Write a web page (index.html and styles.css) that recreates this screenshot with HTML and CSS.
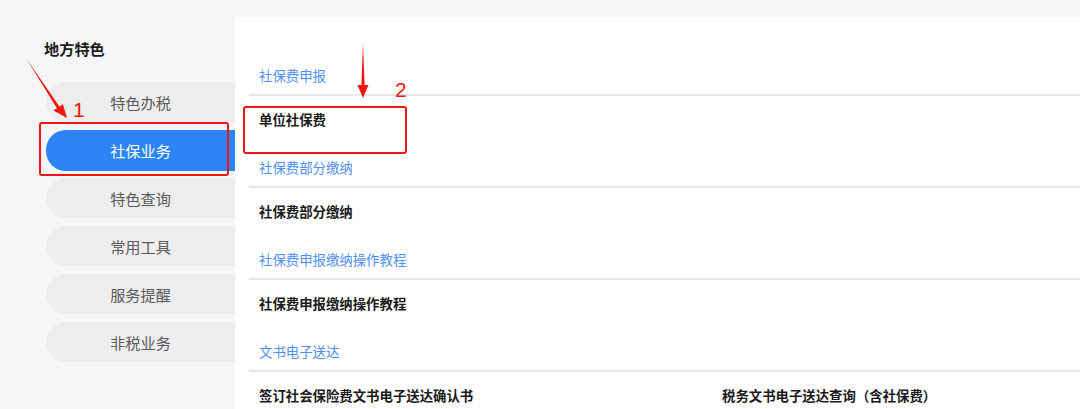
FILE: index.html
```html
<!DOCTYPE html>
<html lang="zh-CN">
<head>
    <meta charset="UTF-8">
    <meta name="viewport" content="width=device-width, initial-scale=1.0">
    <title>地方特色</title>
    <link rel="stylesheet" href="styles.css">
</head>
<body>
    <div class="page">
        <div class="sidebar">
            <h3 class="sidebar-title">地方特色</h3>
            <ul class="menu">
                <li class="menu-item">特色办税</li>
                <li class="menu-item active">社保业务</li>
                <li class="menu-item">特色查询</li>
                <li class="menu-item">常用工具</li>
                <li class="menu-item">服务提醒</li>
                <li class="menu-item">非税业务</li>
            </ul>
        </div>

        <div class="panel">
            <div class="group">
                <div class="group-title">社保费申报</div>
                <div class="group-items">
                    <span class="item">单位社保费</span>
                </div>
            </div>
            <div class="group">
                <div class="group-title">社保费部分缴纳</div>
                <div class="group-items">
                    <span class="item">社保费部分缴纳</span>
                </div>
            </div>
            <div class="group">
                <div class="group-title">社保费申报缴纳操作教程</div>
                <div class="group-items">
                    <span class="item">社保费申报缴纳操作教程</span>
                </div>
            </div>
            <div class="group">
                <div class="group-title">文书电子送达</div>
                <div class="group-items">
                    <span class="item">签订社会保险费文书电子送达确认书</span>
                    <span class="item">税务文书电子送达查询（含社保费）</span>
                </div>
            </div>
        </div>
    </div>

    <!-- annotation layer -->
    <div class="mark mark-1"></div>
    <div class="mark mark-2"></div>
    <svg class="arrows" width="1080" height="409" viewBox="0 0 1080 409">
        <polygon points="26,58 59.4,106.4 62.9,104.2 67,118 53.4,110.4 56.9,108.2" fill="#f01616"/>
        <polygon points="363,43 364.6,85 368.5,85 363,98 357.5,85 361.4,85" fill="#f01616"/>
        <text x="73" y="117" class="num">1</text>
        <text x="395" y="97" class="num">2</text>
    </svg>
</body>
</html>
```

FILE: styles.css
```css
* {
    box-sizing: border-box;
}

body {
    margin: 0;
    background-color: #f5f6f8;
    font-family: "Noto Sans CJK SC", "Noto Sans", sans-serif;
    overflow: hidden;
}

.page {
    display: flex;
    width: 1080px;
    height: 409px;
    overflow: hidden;
}

.sidebar {
    width: 235px;
    flex-shrink: 0;
    padding-top: 37px;
}

.sidebar-title {
    margin: 0 0 23px 44px;
    font-size: 15.2px;
    line-height: 22px;
    font-weight: bold;
    color: #1a1a1a;
}

.menu {
    list-style: none;
    margin: 0;
    padding: 0 0 0 46px;
    display: flex;
    flex-direction: column;
    gap: 8px;
}

.menu-item {
    height: 40px;
    line-height: 40px;
    text-align: center;
    font-size: 15.2px;
    color: #5a5a5a;
    background-color: #ededed;
    border-radius: 20px 0 0 20px;
}

.menu-item.active {
    height: 41px;
    line-height: 41px;
    background-color: #2c84f6;
    color: #fff;
}

.menu-item.active + .menu-item {
    margin-top: -1px;
}

.panel {
    flex: 1;
    margin-top: 17px;
    background-color: #fff;
    padding: 48px 0 0 14px;
}

.group-title {
    padding: 0 0 9px 10px;
    line-height: 20px;
    font-size: 13.4px;
    color: #4f8ff5;
    border-bottom: 2px solid #e6e6e6;
}

.group-items {
    display: grid;
    grid-template-columns: 463px 1fr;
    padding: 13px 0 28px 10px;
}

.item {
    line-height: 20px;
    font-size: 13.4px;
    font-weight: bold;
    color: #1a1a1a;
}

.mark {
    position: absolute;
    border: 2px solid #f01616;
    border-radius: 3px;
}

.mark-1 {
    left: 39px;
    top: 122px;
    width: 190px;
    height: 54px;
}

.mark-2 {
    left: 243px;
    top: 106px;
    width: 164px;
    height: 48px;
}

.arrows {
    position: absolute;
    left: 0;
    top: 0;
    pointer-events: none;
}

.num {
    font-family: "Liberation Sans", Arial, sans-serif;
    font-size: 21px;
    fill: #f01616;
}
```
